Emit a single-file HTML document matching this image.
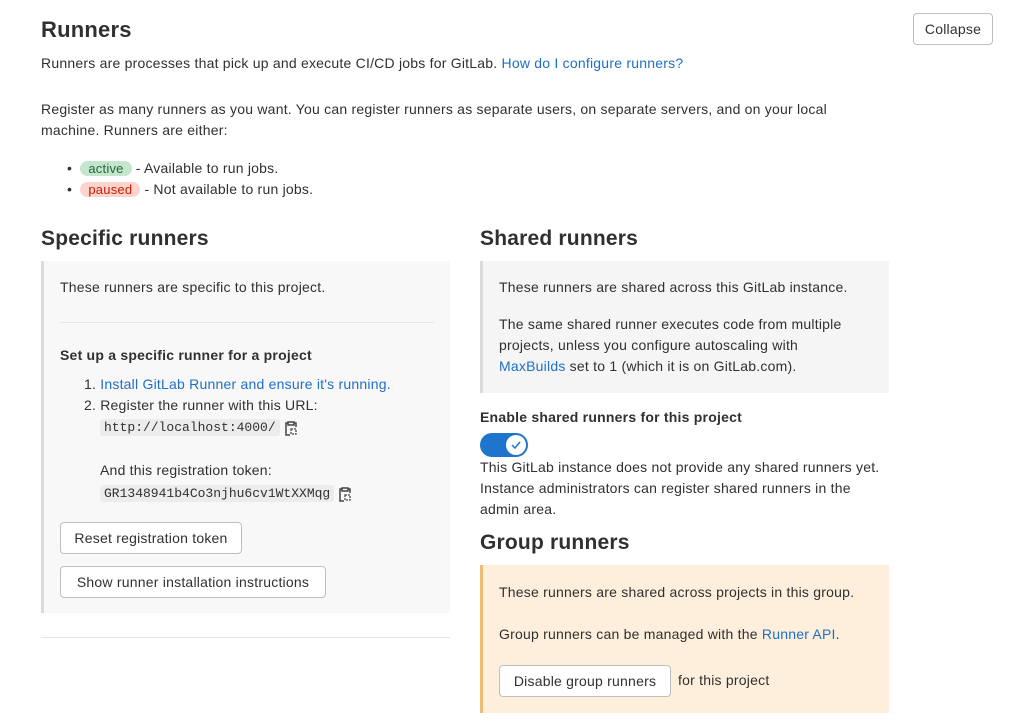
<!DOCTYPE html>
<html><head><meta charset="utf-8"><style>
body{margin:0;width:1010px;height:725px;background:#fff;font-family:"Liberation Sans","DejaVu Sans",sans-serif;color:#303030;font-size:14px;position:relative;overflow:hidden;letter-spacing:0.22px}
.a{position:absolute;white-space:nowrap}
h2{margin:0;font-size:21px;font-weight:bold;color:#303030;position:absolute;letter-spacing:0.2px}
a{color:#1f6fc5;text-decoration:none}
.btn{position:absolute;border:1px solid #bfbfbf;border-radius:4px;background:#fff;font-size:14px;display:flex;align-items:center;justify-content:center;color:#303030}
.code{background:#ececec;font-family:"Liberation Mono",monospace;font-size:13px;padding:1px 4px;border-radius:3px;letter-spacing:0}
.box{position:absolute}
.badge{border-radius:10px;padding:0 8px;font-size:13px}
</style></head><body>
<h2 style="left:41px;top:17px;font-size:22px">Runners</h2>
<div class="btn" style="left:913px;top:13px;width:78px;height:30px">Collapse</div>
<div class="a" style="left:41px;top:55px">Runners are processes that pick up and execute CI/CD jobs for GitLab. <a>How do I configure runners?</a></div>
<div class="a" style="left:41px;top:101px">Register as many runners as you want. You can register runners as separate users, on separate servers, and on your local</div>
<div class="a" style="left:41px;top:122px">machine. Runners are either:</div>
<div class="a" style="left:67px;top:160px">•&nbsp;&nbsp;<span class="badge" style="background:#c3e6cd;color:#24663b">active</span> - Available to run jobs.</div>
<div class="a" style="left:67px;top:181px">•&nbsp;&nbsp;<span class="badge" style="background:#fdd4cd;color:#c91c00">paused</span> - Not available to run jobs.</div>

<h2 style="left:41px;top:227px">Specific runners</h2>
<div class="box" style="left:41px;top:261px;width:406px;height:352px;background:#f8f8f8;border-left:3px solid #dbdbdb"></div>
<div class="a" style="left:60px;top:279px">These runners are specific to this project.</div>
<div class="box" style="left:60px;top:322px;width:374px;height:1px;background:#e5e5e5"></div>
<div class="a" style="left:60px;top:347px;font-weight:bold">Set up a specific runner for a project</div>
<div class="a" style="left:84px;top:376px">1. <a>Install GitLab Runner and ensure it's running.</a></div>
<div class="a" style="left:84px;top:397px">2. Register the runner with this URL:</div>
<div class="a" style="left:100px;top:418px"><span class="code">http://localhost:4000/</span></div>
<svg class="a" style="left:284px;top:420px" width="14" height="16" viewBox="0 0 14 16"><path d="M4 3H2v12h4M10 3h2v4M4 2h6v3H4z" fill="none" stroke="#444" stroke-width="1.5"/><rect x="7" y="9" width="5" height="5" fill="none" stroke="#444" stroke-width="1.3" stroke-dasharray="2 1"/></svg>
<div class="a" style="left:100px;top:462px">And this registration token:</div>
<div class="a" style="left:100px;top:484px"><span class="code">GR1348941b4Co3njhu6cv1WtXXMqg</span></div>
<svg class="a" style="left:338px;top:486px" width="14" height="16" viewBox="0 0 14 16"><path d="M4 3H2v12h4M10 3h2v4M4 2h6v3H4z" fill="none" stroke="#444" stroke-width="1.5"/><rect x="7" y="9" width="5" height="5" fill="none" stroke="#444" stroke-width="1.3" stroke-dasharray="2 1"/></svg>
<div class="btn" style="left:60px;top:522px;width:180px;height:30px">Reset registration token</div>
<div class="btn" style="left:60px;top:566px;width:264px;height:30px">Show runner installation instructions</div>
<div class="box" style="left:41px;top:637px;width:409px;height:1px;background:#e5e5e5"></div>

<h2 style="left:480px;top:227px">Shared runners</h2>
<div class="box" style="left:480px;top:261px;width:406px;height:132px;background:#f5f5f5;border-left:3px solid #dbdbdb"></div>
<div class="a" style="left:499px;top:279px">These runners are shared across this GitLab instance.</div>
<div class="a" style="left:499px;top:316px">The same shared runner executes code from multiple</div>
<div class="a" style="left:499px;top:337px">projects, unless you configure autoscaling with</div>
<div class="a" style="left:499px;top:358px"><a>MaxBuilds</a> set to 1 (which it is on GitLab.com).</div>
<div class="a" style="left:480px;top:409px;font-weight:bold">Enable shared runners for this project</div>
<div class="box" style="left:480px;top:433px;width:48px;height:24px;border-radius:12px;background:#1f75cb"></div>
<div class="box" style="left:506px;top:435px;width:20px;height:20px;border-radius:50%;background:#fff"></div>
<svg class="a" style="left:509px;top:438px" width="14" height="14"><path d="M3 7l3 3 5-6" fill="none" stroke="#1f75cb" stroke-width="1.5"/></svg>
<div class="a" style="left:480px;top:459px">This GitLab instance does not provide any shared runners yet.</div>
<div class="a" style="left:480px;top:480px">Instance administrators can register shared runners in the</div>
<div class="a" style="left:480px;top:501px">admin area.</div>

<h2 style="left:480px;top:531px">Group runners</h2>
<div class="box" style="left:480px;top:565px;width:406px;height:148px;background:#fdefdc;border-left:3px solid #e9be74"></div>
<div class="a" style="left:499px;top:584px">These runners are shared across projects in this group.</div>
<div class="a" style="left:499px;top:626px">Group runners can be managed with the <a>Runner API</a>.</div>
<div class="btn" style="left:499px;top:665px;width:170px;height:30px">Disable group runners</div>
<div class="a" style="left:678px;top:672px">for this project</div>
</body></html>
